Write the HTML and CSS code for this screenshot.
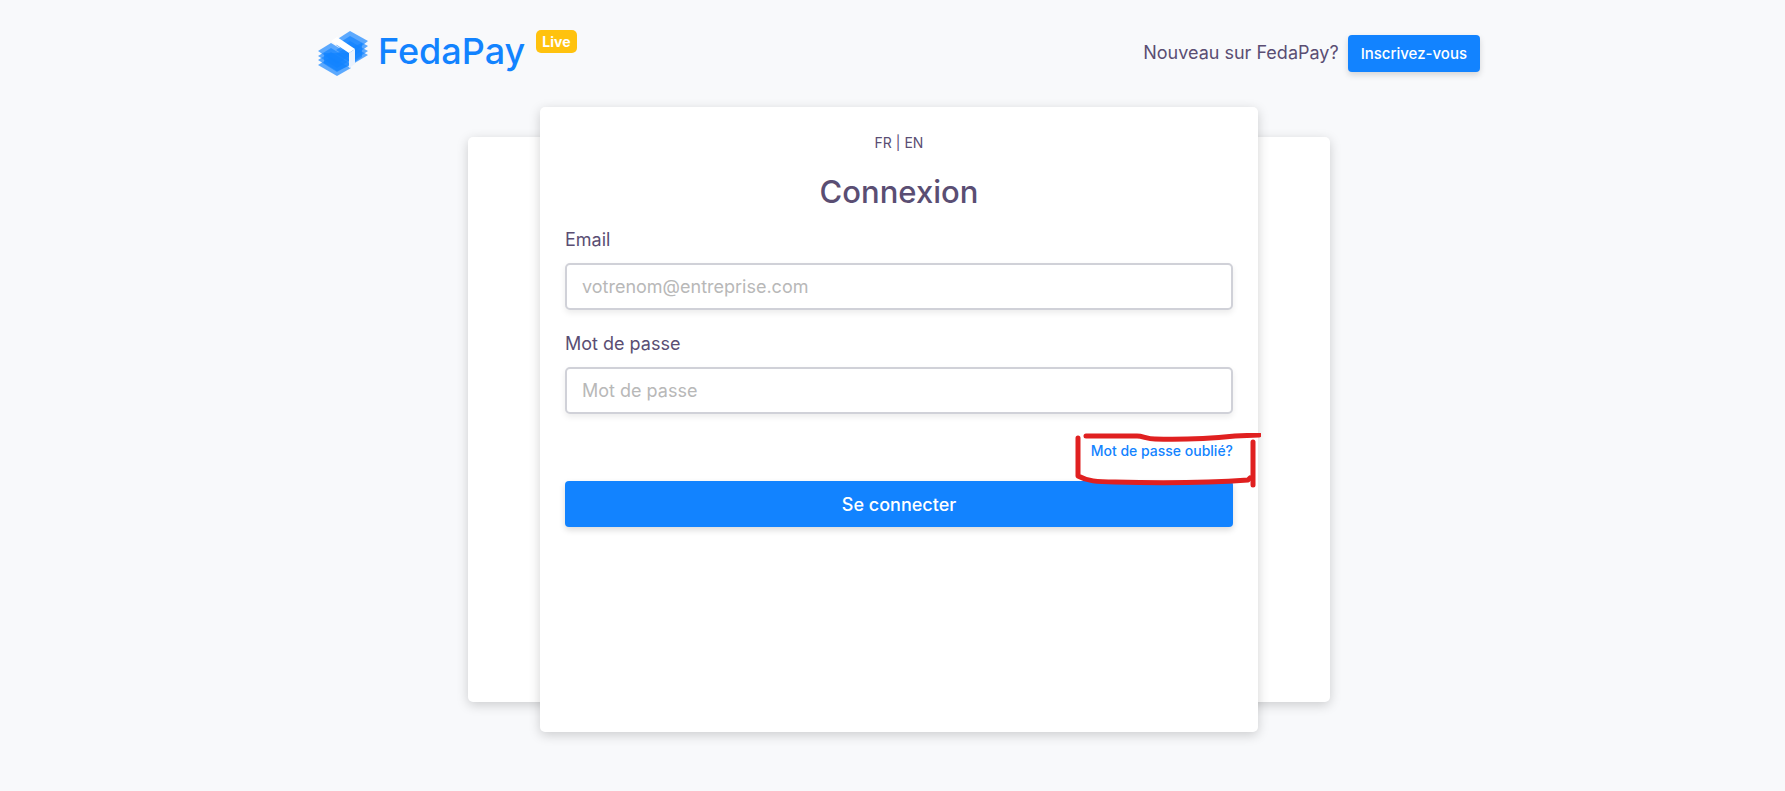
FILE: index.html
```
<!DOCTYPE html>
<html lang="fr">
<head>
    <meta charset="UTF-8">
    <meta name="viewport" content="width=device-width, initial-scale=1.0">
    <title>FedaPay - Connexion</title>
    <link rel="stylesheet" href="styles.css">
</head>
<body>

<header class="header">
    <div class="brand">
        <a href="#" class="logo">
            <svg class="logo-icon" viewBox="0 0 50 45" aria-hidden="true">
                <!-- pile de billets arrière -->
                <g fill="#1283ff" fill-opacity="0.68">
                    <path d="M32 14 50 24 35 33 18 23z"/>
                    <path d="M32 10 50 20 35 30 18 19z"/>
                    <path d="M32 5 50 15 35 26 18 14z"/>
                    <path d="M32 0 50 10 35 22 18 9z"/>
                    <path d="M35 16 44 12 44 26 35 32z"/>
                </g>
                <!-- pile de billets avant -->
                <g fill="#1283ff" fill-opacity="0.68">
                    <path d="M13 26 0 34 19 45 33 37z"/>
                    <path d="M13 21 0 29 19 41 33 33z"/>
                    <path d="M13 17 0 25 19 37 33 29z"/>
                    <path d="M13 12 0 20 19 33 33 24z"/>
                    <path d="M19 22 33 22 33 34 19 40 6 32 6 22z"/>
                </g>
                <!-- bande -->
                <path fill="#ffffff" d="M13 10 19 6 37 18 31 22z"/>
                <path fill="#eaf2fd" d="M31 22 37 18 37 33 31 37z"/>
            </svg>
            <span>FedaPay</span>
        </a>
        <span class="badge">Live</span>
    </div>
    <div class="signup">
        <span>Nouveau sur FedaPay?</span>
        <a href="#" class="btn btn-small">Inscrivez-vous</a>
    </div>
</header>

<main class="card">
    <nav class="lang"><a href="#">FR</a> | <a href="#">EN</a></nav>
    <h1>Connexion</h1>
    <form>
        <label for="email">Email</label>
        <input type="email" id="email" placeholder="votrenom@entreprise.com">
        <label for="password">Mot de passe</label>
        <input type="password" id="password" placeholder="Mot de passe">
        <div class="forgot">
            <a href="#">Mot de passe oublié?</a>
            <!-- cadre rouge autour du lien -->
            <svg class="mark" viewBox="0 0 186 56" aria-hidden="true">
                <g fill="none" stroke="#e02020" stroke-width="5" stroke-linecap="round" stroke-linejoin="round">
                    <path d="M11 3H62C68 3 72 6 80 6C110 7 140 5 160 3L184 2"/>
                    <path d="M3 5V43C12 48 22 49 40 49C80 50 130 50 173 47L175 45"/>
                    <path d="M178 9 178 52"/>
                </g>
            </svg>
        </div>
        <button type="submit" class="btn btn-submit">Se connecter</button>
    </form>
</main>

</body>
</html>
```
FILE: styles.css
```
* {
    box-sizing: border-box;
}
body {
    font-family: Inter, "Liberation Sans", sans-serif;
    font-size: 18px;
    line-height: 24px;
    font-weight: 400;
    color: #5a4e73;
    background-color: #f8f9fb;
    margin: 0;
    padding: 28px 0 58px 13px;
}
a {
    color: inherit;
    text-decoration: none;
}
.header {
    display: flex;
    justify-content: space-between;
    align-items: center;
    max-width: 1162px;
    margin: 0 auto 29px;
}
.brand {
    display: flex;
    align-items: flex-start;
    gap: 11px;
}
.logo {
    display: flex;
    align-items: center;
    gap: 10px;
    height: 50px;
    font-size: 36px;
    line-height: 44px;
    font-weight: 500;
    color: #1283ff;
}
.logo span {
    padding-bottom: 4px;
}
.logo-icon {
    width: 50px;
    height: 45px;
}
.badge {
    margin-top: 2px;
    padding: 0 6px;
    font-size: 14px;
    line-height: 23px;
    font-weight: 700;
    color: #fff;
    background-color: #ffc20e;
    border-radius: 5px;
}
.signup {
    display: flex;
    align-items: center;
    gap: 9px;
}
.btn {
    display: block;
    border: none;
    border-radius: 4px;
    background-color: #1283ff;
    color: #fff;
    font-family: inherit;
    font-weight: 500;
    text-align: center;
    cursor: pointer;
    box-shadow: 0 3px 6px rgba(0, 0, 0, 0.15);
}
.btn-small {
    padding: 0 13px;
    font-size: 15px;
    line-height: 37px;
}
.card {
    position: relative;
    max-width: 718px;
    min-height: 625px;
    margin: 0 auto;
    padding: 24px 25px;
    background-color: #fff;
    border-radius: 5px;
    box-shadow: 0 3px 12px rgba(0, 0, 0, 0.18);
}
/* carte décorative derrière le formulaire */
.card::before {
    content: "";
    position: absolute;
    z-index: -1;
    inset: 30px -72px;
    background-color: #fff;
    border-radius: 5px;
    box-shadow: 0 3px 12px rgba(0, 0, 0, 0.18);
}
.lang {
    font-size: 14px;
    text-align: center;
}
h1 {
    margin: 17px 0 16px;
    font-size: 31px;
    line-height: 40px;
    font-weight: 500;
    text-align: center;
}
label {
    display: block;
    margin-bottom: 11px;
}
input {
    display: block;
    width: 100%;
    height: 47px;
    margin-bottom: 22px;
    padding: 0 15px;
    border: 2px solid #d0d1d8;
    border-radius: 5px;
    font-family: inherit;
    font-size: 18px;
    color: #5a4e73;
    box-shadow: 0 3px 6px rgba(0, 0, 0, 0.08);
}
input::placeholder {
    color: #b8b8b8;
}
.forgot {
    position: relative;
    display: flex;
    justify-content: flex-end;
    margin: 25px 0 18px;
    font-size: 14px;
    font-weight: 500;
    color: #1283ff;
}
.mark {
    position: absolute;
    top: -6px;
    right: -28px;
    width: 186px;
    height: 56px;
    pointer-events: none;
}
.btn-submit {
    width: 100%;
    height: 46px;
    font-size: 18px;
}
```
